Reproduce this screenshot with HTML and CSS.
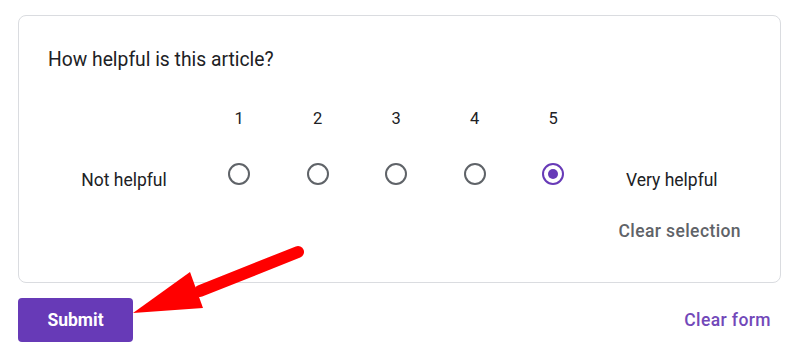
FILE: index.html
```html
<!DOCTYPE html>
<html lang="en">
<head>
  <meta charset="UTF-8">
  <title>How helpful is this article?</title>
  <link rel="stylesheet" href="styles.css">
</head>
<body>
  <form class="form">
    <div class="card">
      <div class="question">How helpful is this article?</div>
      <div class="scale">
        <span></span>
        <span class="num">1</span>
        <span class="num">2</span>
        <span class="num">3</span>
        <span class="num">4</span>
        <span class="num">5</span>
        <span></span>
        <span class="end-label">Not helpful</span>
        <span class="radio-cell"><span class="radio"></span></span>
        <span class="radio-cell"><span class="radio"></span></span>
        <span class="radio-cell"><span class="radio"></span></span>
        <span class="radio-cell"><span class="radio"></span></span>
        <span class="radio-cell"><span class="radio checked"></span></span>
        <span class="end-label">Very helpful</span>
      </div>
      <div class="clear-row">
        <button type="button" class="clear-selection">Clear selection</button>
      </div>
    </div>
    <div class="actions">
      <button type="button" class="submit">Submit</button>
      <button type="button" class="clear-form">Clear form</button>
    </div>
  </form>

  <svg class="arrow" width="800" height="350" viewBox="0 0 800 350">
    <line x1="298" y1="252" x2="200" y2="291" stroke="#ff0000" stroke-width="12" stroke-linecap="round"/>
    <polygon points="133,313 190,272 203,308" fill="#ff0000"/>
  </svg>
</body>
</html>
```

FILE: styles.css
```css
body { margin: 0; padding: 15px 19px 0 18px; background: #fff; font-family: Roboto, "Liberation Sans", sans-serif; color: #202124; }
button { font-family: Roboto, "Liberation Sans", sans-serif; border: none; background: none; cursor: pointer; }

.card { border: 1px solid #dadce0; border-radius: 8px; padding: 30px 29px 33px 29px; }
.question { font-size: 19.3px; line-height: 28px; }

.scale { display: grid; grid-template-columns: 152px repeat(5, 78.5px) 1fr; grid-template-rows: 24px 48px; row-gap: 19px; margin-top: 33px; }
.num { font-size: 16.5px; line-height: 24px; text-align: center; }
.end-label { font-size: 17.5px; line-height: 24px; text-align: center; align-self: center; margin-top: 12px; }
.radio-cell { display: flex; align-items: center; justify-content: center; }
.radio { width: 22px; height: 22px; box-sizing: border-box; border: 2px solid #5f6368; border-radius: 50%; display: flex; align-items: center; justify-content: center; }
.radio.checked { border-color: #673ab7; }
.radio.checked::after { content: ""; width: 10px; height: 10px; border-radius: 50%; background: #673ab7; }

.clear-row { display: flex; justify-content: flex-end; margin-top: 15px; }
.clear-selection { height: 36px; padding: 0 10px; font-size: 17.5px; font-weight: 500; color: #5f6368; letter-spacing: 0.4px; }

.actions { display: flex; justify-content: space-between; align-items: center; margin-top: 15px; }
.submit { width: 115px; height: 44px; border-radius: 4px; background: #673ab7; color: #fff; font-size: 17.5px; font-weight: 700; }
.clear-form { height: 36px; padding: 0 10px; font-size: 17.5px; font-weight: 500; color: #7248b9; letter-spacing: 0.4px; }

.arrow { position: absolute; left: 0; top: 0; pointer-events: none; }
```
